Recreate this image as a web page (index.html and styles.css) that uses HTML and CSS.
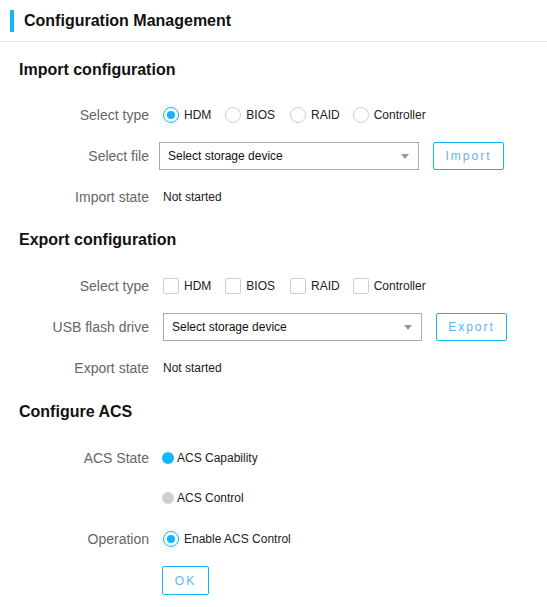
FILE: index.html
```html
<!DOCTYPE html>
<html>
<head>
<meta charset="utf-8">
<link rel="stylesheet" href="styles.css">
</head>
<body>
<div class="header"><span class="bar"></span><span class="title">Configuration Management</span></div>

<div class="section">
  <h2 class="heading">Import configuration</h2>
  <div class="row">
    <div class="label">Select type</div>
    <div class="opts">
      <span class="opt"><span class="radio on"></span>HDM</span>
      <span class="opt"><span class="radio"></span>BIOS</span>
      <span class="opt"><span class="radio"></span>RAID</span>
      <span class="opt"><span class="radio"></span>Controller</span>
    </div>
  </div>
  <div class="row">
    <div class="label">Select file</div>
    <div class="select shift"><span>Select storage device</span><span class="caret"></span></div>
    <button class="btn">Import</button>
  </div>
  <div class="row">
    <div class="label">Import state</div>
    <div class="value">Not started</div>
  </div>
</div>

<div class="section">
  <h2 class="heading">Export configuration</h2>
  <div class="row">
    <div class="label">Select type</div>
    <div class="opts">
      <span class="opt"><span class="check"></span>HDM</span>
      <span class="opt"><span class="check"></span>BIOS</span>
      <span class="opt"><span class="check"></span>RAID</span>
      <span class="opt"><span class="check"></span>Controller</span>
    </div>
  </div>
  <div class="row">
    <div class="label">USB flash drive</div>
    <div class="select"><span>Select storage device</span><span class="caret"></span></div>
    <button class="btn">Export</button>
  </div>
  <div class="row">
    <div class="label">Export state</div>
    <div class="value">Not started</div>
  </div>
</div>

<div class="section">
  <h2 class="heading">Configure ACS</h2>
  <div class="row acs-first">
    <div class="label">ACS State</div>
    <div class="opt dotopt"><span class="dot blue"></span>ACS Capability</div>
  </div>
  <div class="row">
    <div class="label"></div>
    <div class="opt dotopt"><span class="dot gray"></span>ACS Control</div>
  </div>
  <div class="row">
    <div class="label">Operation</div>
    <div class="opt"><span class="radio on"></span>Enable ACS Control</div>
  </div>
  <div class="row">
    <div class="label"></div>
    <button class="btn ok">OK</button>
  </div>
</div>
</body>
</html>
```
FILE: styles.css
```css
body {
  margin: 0;
  background: #fff;
  font-family: "Liberation Sans", Arial, sans-serif;
  color: #222;
}
.header {
  height: 41px;
  border-bottom: 1px solid #e6e6e6;
  display: flex;
  align-items: center;
  padding-left: 10px;
}
.bar {
  width: 4px;
  height: 22px;
  background: #12b6fb;
  margin-right: 10px;
}
.title {
  font-size: 16px;
  font-weight: bold;
  color: #111;
}
.section {
  padding-left: 19px;
}
.heading {
  margin: 18px 0 21px 0;
  height: 20px;
  line-height: 20px;
  font-size: 16px;
  font-weight: bold;
  color: #111;
}
.section + .section .heading {
  margin-top: 19px;
  margin-bottom: 22px;
}
.section:last-child .heading {
  margin-top: 20px;
}
.row {
  display: flex;
  align-items: center;
  height: 28px;
  margin-bottom: 13px;
}
.acs-first {
  margin-bottom: 12px;
}
.label {
  width: 130px;
  margin-right: 14px;
  text-align: right;
  font-size: 14px;
  color: #666;
  flex: none;
}
.value {
  font-size: 12px;
  color: #222;
}
.opts {
  display: flex;
  align-items: center;
}
.opt {
  display: flex;
  align-items: center;
  font-size: 12px;
  color: #222;
  margin-right: 14px;
}
.opts .opt:nth-child(2) { margin-right: 15px; }
.opts .opt:nth-child(3) { margin-right: 13px; }
.radio {
  width: 14px;
  height: 14px;
  border: 1px solid #cfcfcf;
  border-radius: 50%;
  margin-right: 5px;
  position: relative;
  flex: none;
}
.radio.on {
  border-color: #12b6fb;
}
.radio.on::after {
  content: "";
  position: absolute;
  left: 3px;
  top: 3px;
  width: 8px;
  height: 8px;
  border-radius: 50%;
  background: #12b6fb;
}
.check {
  width: 14px;
  height: 14px;
  border: 1px solid #cfcfcf;
  border-radius: 2px;
  margin-right: 5px;
  flex: none;
}
.dotopt {
  margin-left: -1px;
}
.dot {
  width: 12px;
  height: 12px;
  border-radius: 50%;
  margin-right: 3px;
  flex: none;
}
.dot.blue { background: #12b6fb; }
.dot.gray { background: #d0d0d0; }
.select {
  width: 240px;
  height: 26px;
  border: 1px solid #aaa;
  display: flex;
  align-items: center;
  justify-content: space-between;
  padding: 0 9px 0 8px;
  font-size: 12px;
  color: #111;
  margin-right: 14px;
}
.select.shift {
  width: 241px;
  margin-left: -4px;
  margin-right: 14px;
}
.caret {
  width: 0;
  height: 0;
  border-left: 4px solid transparent;
  border-right: 4px solid transparent;
  border-top: 5px solid #999;
}
.btn {
  width: 71px;
  height: 28px;
  border: 1px solid #12b6fb;
  border-radius: 2px;
  background: #fff;
  color: #5fb4ef;
  font-family: "Liberation Sans", Arial, sans-serif;
  font-size: 12px;
  letter-spacing: 2px;
  padding: 0;
  margin-top: -1px;
}
.btn.ok {
  width: 47px;
  height: 29px;
  margin-left: -1px;
  margin-top: 1px;
}
```
